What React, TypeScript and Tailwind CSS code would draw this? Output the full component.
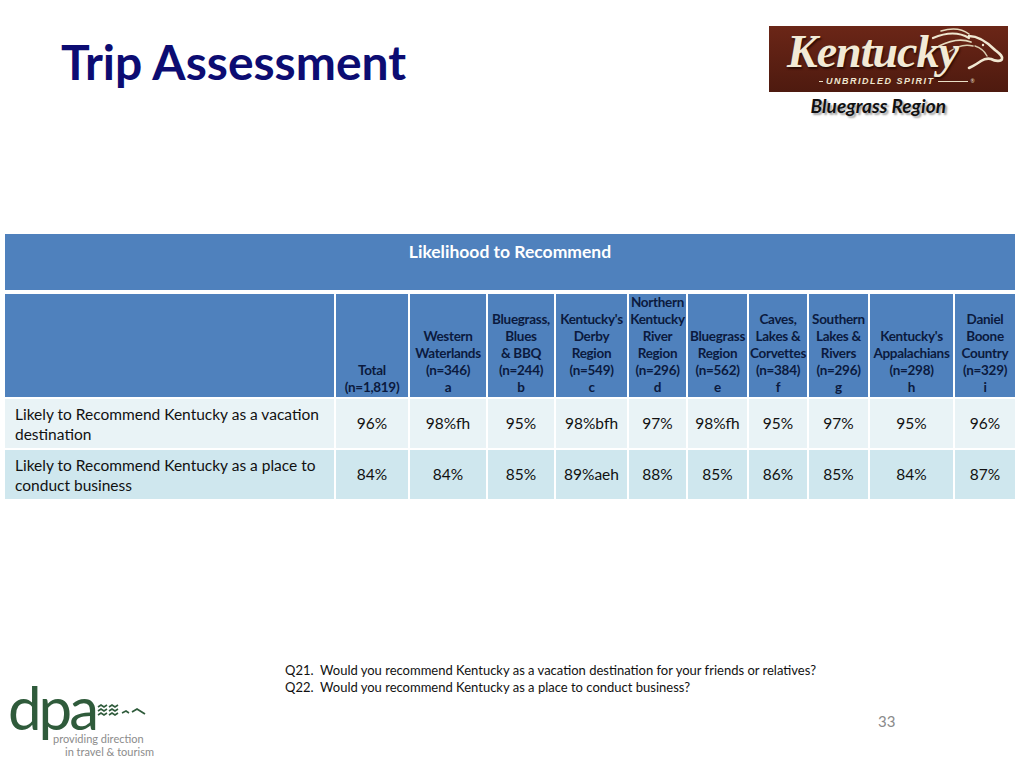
import React from "react";

const font = { fontFamily: "Lato, 'Open Sans', sans-serif" };

const columns = [
  { lines: ["Total", "(n=1,819)"] },
  { lines: ["Western", "Waterlands", "(n=346)", "a"] },
  { lines: ["Bluegrass,", "Blues", "& BBQ", "(n=244)", "b"] },
  { lines: ["Kentucky's", "Derby", "Region", "(n=549)", "c"] },
  { lines: ["Northern", "Kentucky", "River", "Region", "(n=296)", "d"] },
  { lines: ["Bluegrass", "Region", "(n=562)", "e"] },
  { lines: ["Caves,", "Lakes &", "Corvettes", "(n=384)", "f"] },
  { lines: ["Southern", "Lakes &", "Rivers", "(n=296)", "g"] },
  { lines: ["Kentucky's", "Appalachians", "(n=298)", "h"] },
  { lines: ["Daniel", "Boone", "Country", "(n=329)", "i"] },
];

const rows = [
  {
    label: "Likely to Recommend Kentucky as a vacation destination",
    values: ["96%", "98%fh", "95%", "98%bfh", "97%", "98%fh", "95%", "97%", "95%", "96%"],
    bg: "bg-[#e9f3f6]",
  },
  {
    label: "Likely to Recommend Kentucky as a place to conduct business",
    values: ["84%", "84%", "85%", "89%aeh", "88%", "85%", "86%", "85%", "84%", "87%"],
    bg: "bg-[#cfe7ee]",
  },
];

function KentuckyLogo() {
  return (
    <div className="relative w-[239px] h-[66px] bg-gradient-to-b from-[#6b2617] to-[#4e1a0f] overflow-hidden">
      <svg className="absolute left-[160px] top-[2px]" width="78" height="44" viewBox="0 0 78 44">
        {/* mane */}
        <path d="M40 10 C30 4 18 4 4 10" fill="none" stroke="#efe6cf" strokeWidth="2.2" strokeLinecap="round" />
        <path d="M42 14 C32 10 22 12 10 18" fill="none" stroke="#e6dbbf" strokeWidth="1.8" strokeLinecap="round" />
        <path d="M40 6 C32 0 22 0 12 3" fill="none" stroke="#e6dbbf" strokeWidth="1.5" strokeLinecap="round" />
        <path d="M44 18 C36 16 28 18 20 24" fill="none" stroke="#d9cdb0" strokeWidth="1.5" strokeLinecap="round" />
        {/* head */}
        <path
          d="M40 8 C50 8 58 14 66 22 C71 26 74 28 73 31 C72 34 66 33 62 31 C58 30 55 31 52 33 C48 36 44 38 40 40"
          fill="none"
          stroke="#f1e8d2"
          strokeWidth="2.6"
          strokeLinecap="round"
        />
        <path d="M46 18 C52 20 56 24 58 28" fill="none" stroke="#d9cdb0" strokeWidth="1.4" strokeLinecap="round" />
        <circle cx="54" cy="17" r="1.2" fill="#f1e8d2" />
      </svg>
      <div
        className="absolute left-[18px] top-[3px] text-[46px] leading-none font-bold italic text-[#f2ead6] tracking-[-1px]"
        style={{ fontFamily: "'Liberation Serif', serif", textShadow: "1px 2px 2px #2a0c05" }}
      >
        Kentucky
      </div>
      <div className="absolute left-[50px] top-[51px] flex items-center gap-[3px]">
        <div className="w-[4px] h-[1px] bg-[#e9dfc6]" />
        <span
          className="text-[9px] leading-none font-bold italic tracking-[1.5px] text-[#efe6cf]"
          style={{ fontFamily: "'Liberation Sans', sans-serif" }}
        >
          UNBRIDLED SPIRIT
        </span>
        <div className="w-[30px] h-[1px] bg-[#e9dfc6]" />
        <span className="text-[5px] text-[#efe6cf]">®</span>
      </div>
    </div>
  );
}

function DpaLogo() {
  return (
    <div className="relative w-[160px] h-[80px]" style={font}>
      <div className="absolute left-[8px] top-[-8px] text-[60px] leading-none text-[#2f5b3b] tracking-[-3px]">dpa</div>
      <svg className="absolute left-[96px] top-[19px]" width="52" height="18" viewBox="0 0 52 18">
        {[0, 1, 2].map((r) => (
          <g key={r} transform={`translate(0 ${r * 4})`}>
            <path d="M2 3 l3 -2 l3 2 l3 -2" fill="none" stroke="#2f5b3b" strokeWidth="1.6" />
            <path d="M13 3 l3 -2 l3 2 l3 -2" fill="none" stroke="#2f5b3b" strokeWidth="1.6" />
          </g>
        ))}
        <path d="M26 9 l4 -2 l3 2" fill="none" stroke="#2f5b3b" strokeWidth="1.6" />
        <path d="M36 8 l5 -3 l8 5" fill="none" stroke="#2f5b3b" strokeWidth="1.8" />
      </svg>
      <div className="absolute left-[53px] top-[47px] text-[11px] leading-[13px] text-[#8c8c8c] whitespace-nowrap">
        providing direction
      </div>
      <div className="absolute left-[65px] top-[60px] text-[11px] leading-[13px] text-[#8c8c8c] whitespace-nowrap">
        in travel &amp; tourism
      </div>
    </div>
  );
}

export default function App() {
  return (
    <div className="w-[1024px] h-[768px] bg-white relative overflow-hidden" style={font}>
      {/* header */}
      <div className="flex justify-between pt-[26px] pr-[16px]">
        <h1 className="ml-[61px] mt-[12px] text-[48px] leading-none font-bold text-[#0c0c72]">
          Trip Assessment
        </h1>
        <div className="flex flex-col items-end">
          <KentuckyLogo />
          <div
            className="mr-[62px] mt-[3px] text-[19px] leading-[22px] font-bold italic text-[#111]"
            style={{ textShadow: "2px 2px 2px #a0a0a0" }}
          >
            Bluegrass Region
          </div>
        </div>
      </div>

      {/* table */}
      <div className="ml-[5px] mt-[117px] w-[1010px]">
        <div className="h-[56px] bg-[#4f81bd] text-white text-[17.5px] font-bold text-center pt-[5px]">
          Likelihood to Recommend
        </div>
        <div className="mt-[4px] grid grid-cols-[329px_72px_76px_66px_71px_57px_59px_58px_59px_83px_60px] gap-[2px]">
          <div className="bg-[#4f81bd] h-[103px]" />
          {columns.map((c, i) => (
            <div
              key={i}
              className="bg-[#4f81bd] flex flex-col justify-end items-center pb-[1px] text-[13.5px] leading-[17px] font-bold text-[#0b1a3e] text-center whitespace-nowrap tracking-[-0.3px]"
            >
              {c.lines.map((l, j) => (
                <span key={j}>{l}</span>
              ))}
            </div>
          ))}
          {rows.map((r, i) => (
            <React.Fragment key={i}>
              <div className={`${r.bg} h-[49px] pl-[10px] pr-[4px] flex items-center text-[15.5px] leading-[20px] text-[#111]`}>
                {r.label}
              </div>
              {r.values.map((v, j) => (
                <div key={j} className={`${r.bg} flex items-center justify-center text-[15.5px] text-[#111]`}>
                  {v}
                </div>
              ))}
            </React.Fragment>
          ))}
        </div>
      </div>

      {/* notes */}
      <div className="absolute left-[285px] top-[662px] text-[13px] leading-[17px] text-[#111]">
        <div>Q21.&nbsp; Would you recommend Kentucky as a vacation destination for your friends or relatives?</div>
        <div>Q22.&nbsp; Would you recommend Kentucky as a place to conduct business?</div>
      </div>
      <div className="absolute left-[878px] top-[710px] text-[15px] text-[#8a8a8a]">33</div>

      <div className="absolute left-0 top-[685px]">
        <DpaLogo />
      </div>
    </div>
  );
}
